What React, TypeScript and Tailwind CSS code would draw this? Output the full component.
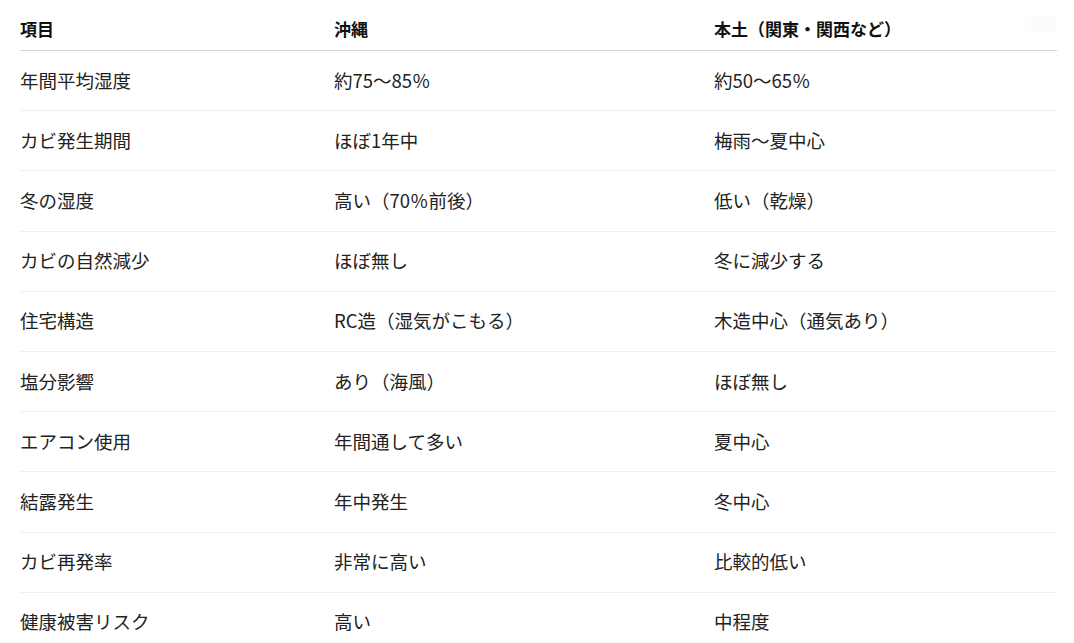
import React from 'react';

const rows = [
  ['年間平均湿度', '約75〜85％', '約50〜65％'],
  ['カビ発生期間', 'ほぼ1年中', '梅雨〜夏中心'],
  ['冬の湿度', '高い（70％前後）', '低い（乾燥）'],
  ['カビの自然減少', 'ほぼ無し', '冬に減少する'],
  ['住宅構造', 'RC造（湿気がこもる）', '木造中心（通気あり）'],
  ['塩分影響', 'あり（海風）', 'ほぼ無し'],
  ['エアコン使用', '年間通して多い', '夏中心'],
  ['結露発生', '年中発生', '冬中心'],
  ['カビ再発率', '非常に高い', '比較的低い'],
  ['健康被害リスク', '高い', '中程度'],
];

export default function App() {
  return (
    <div className="relative h-[643px] w-[1074px] overflow-hidden bg-white font-['Noto_Sans_CJK_JP','Noto_Sans',sans-serif]">
      {/* faint copy button, mostly hidden */}
      <div className="absolute right-[18px] top-[15px] h-[17px] w-[31px] rounded bg-[#fcfcfc]" />

      <div className="ml-[20px] w-[1037px]">
        {/* header */}
        <div className="grid h-[51px] grid-cols-[314px_380px_343px] items-center border-b border-[#d4d4d4] pt-[7px] text-[17px] font-bold text-[#111]">
          <div>項目</div>
          <div>沖縄</div>
          <div>本土（関東・関西など）</div>
        </div>

        {/* body */}
        {rows.map((r, idx) => (
          <div
            key={idx}
            className="grid h-[60.2px] grid-cols-[314px_380px_343px] items-center border-b border-[#efefef] text-[18.5px] text-[#222]"
          >
            <div>{r[0]}</div>
            <div>{r[1]}</div>
            <div>{r[2]}</div>
          </div>
        ))}
      </div>
    </div>
  );
}
